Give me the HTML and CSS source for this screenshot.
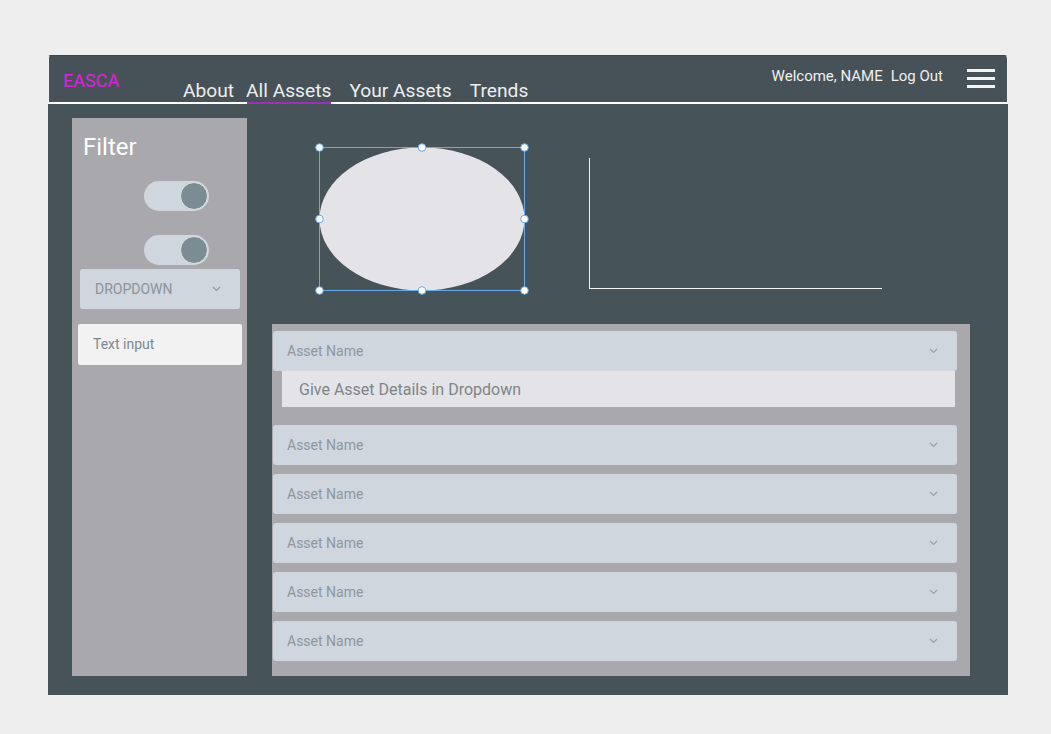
FILE: index.html
```html
<!DOCTYPE html>
<html>
<head>
<meta charset="utf-8">
<link rel="stylesheet" href="styles.css">
</head>
<body>
<div class="frame">
  <header class="header">
    <div class="brand">EASCA</div>
    <nav class="nav">
      <a class="nav-link">About</a>
      <a class="nav-link active">All Assets</a>
      <a class="nav-link">Your Assets</a>
      <a class="nav-link">Trends</a>
    </nav>
    <div class="user">
      <span class="welcome">Welcome, NAME</span>
      <span class="logout">Log Out</span>
    </div>
    <div class="burger"><span></span><span></span><span></span></div>
  </header>
  <main class="body">
    <aside class="sidebar">
      <h2 class="filter-title">Filter</h2>
      <div class="toggle"><span class="knob"></span></div>
      <div class="toggle second"><span class="knob"></span></div>
      <div class="dropdown">
        <span>DROPDOWN</span>
        <svg class="chev" width="9" height="6" viewBox="0 0 9 6"><path d="M1 1l3.5 3.5L8 1" fill="none" stroke="#8e989d" stroke-width="1.2"/></svg>
      </div>
      <div class="text-input">Text input</div>
    </aside>
    <section class="content">
      <div class="charts">
        <div class="shape">
          <svg width="214" height="152" viewBox="0 0 214 152">
            <ellipse cx="107" cy="76" rx="102.5" ry="71.5" fill="#e4e3e7"/>
            <rect x="4.5" y="4.5" width="205" height="143" fill="none" stroke="#66aaeb" stroke-width="1"/>
            <g fill="#ffffff" stroke="#66aaeb" stroke-width="1">
              <circle cx="4.5" cy="4.5" r="3.8"/>
              <circle cx="107" cy="4.5" r="3.8"/>
              <circle cx="209.5" cy="4.5" r="3.8"/>
              <circle cx="4.5" cy="76" r="3.8"/>
              <circle cx="209.5" cy="76" r="3.8"/>
              <circle cx="4.5" cy="147.5" r="3.8"/>
              <circle cx="107" cy="147.5" r="3.8"/>
              <circle cx="209.5" cy="147.5" r="3.8"/>
            </g>
          </svg>
        </div>
        <div class="axes"></div>
      </div>
      <div class="list">
        <div class="item open">
          <div class="item-head"><span>Asset Name</span><svg class="chev" width="9" height="6" viewBox="0 0 9 6"><path d="M1 1l3.5 3.5L8 1" fill="none" stroke="#98a1a6" stroke-width="1.2"/></svg></div>
          <div class="item-body">Give Asset Details in Dropdown</div>
        </div>
        <div class="item"><div class="item-head"><span>Asset Name</span><svg class="chev" width="9" height="6" viewBox="0 0 9 6"><path d="M1 1l3.5 3.5L8 1" fill="none" stroke="#98a1a6" stroke-width="1.2"/></svg></div></div>
        <div class="item"><div class="item-head"><span>Asset Name</span><svg class="chev" width="9" height="6" viewBox="0 0 9 6"><path d="M1 1l3.5 3.5L8 1" fill="none" stroke="#98a1a6" stroke-width="1.2"/></svg></div></div>
        <div class="item"><div class="item-head"><span>Asset Name</span><svg class="chev" width="9" height="6" viewBox="0 0 9 6"><path d="M1 1l3.5 3.5L8 1" fill="none" stroke="#98a1a6" stroke-width="1.2"/></svg></div></div>
        <div class="item"><div class="item-head"><span>Asset Name</span><svg class="chev" width="9" height="6" viewBox="0 0 9 6"><path d="M1 1l3.5 3.5L8 1" fill="none" stroke="#98a1a6" stroke-width="1.2"/></svg></div></div>
        <div class="item"><div class="item-head"><span>Asset Name</span><svg class="chev" width="9" height="6" viewBox="0 0 9 6"><path d="M1 1l3.5 3.5L8 1" fill="none" stroke="#98a1a6" stroke-width="1.2"/></svg></div></div>
      </div>
    </section>
  </main>
</div>
</body>
</html>
```
FILE: styles.css
```css
* { box-sizing: border-box; }
html, body { margin: 0; padding: 0; }
body {
  background: #eeeeee;
  font-family: Roboto, "Liberation Sans", sans-serif;
  width: 1051px;
  height: 734px;
  overflow: hidden;
}
.frame {
  margin: 55px 0 0 48px;
  width: 960px;
  height: 640px;
  display: flex;
  flex-direction: column;
}
.header {
  height: 49px;
  background: #465257;
  border: 1px solid #f2f2f2;
  border-top-color: #3e494e;
  border-bottom: 2px solid #ffffff;
  border-radius: 3px 4px 0 0;
  display: flex;
  align-items: flex-start;
  padding-left: 14px;
}
.brand {
  color: #e020e0;
  font-size: 18px;
  line-height: 20px;
  margin-top: 15px;
  width: 120px;
}
.nav {
  display: flex;
  margin-top: 23px;
}
.nav-link {
  color: #eeeeee;
  font-size: 19.2px;
  line-height: 23px;
  margin-right: 18px;
  position: relative;
}
.nav-link:first-child { margin-right: 12px; }
.nav-link.active::after {
  content: "";
  position: absolute;
  left: 1px;
  right: 0;
  bottom: -2px;
  height: 2px;
  background: #9b32b4;
}
.user {
  margin-left: auto;
  margin-top: 11px;
  display: flex;
  font-size: 15px;
  line-height: 19px;
  color: #f0f0f0;
}
.welcome { margin-right: 8px; }
.burger {
  margin: 13px 12px 0 24px;
  width: 28px;
  display: flex;
  flex-direction: column;
  gap: 5px;
}
.burger span {
  display: block;
  height: 3px;
  background: #f4f4f4;
}
.body {
  flex: 1;
  background: #465358;
  display: flex;
  padding: 14px 0 19px 24px;
}
.sidebar {
  width: 175px;
  background: #a9a8ac;
  padding: 0 5px 0 6px;
  display: flex;
  flex-direction: column;
}
.filter-title {
  margin: 15px 0 0 5px;
  font-weight: 400;
  font-size: 24px;
  line-height: 28px;
  color: #ffffff;
}
.toggle {
  margin: 20px 0 0 66px;
  width: 65px;
  height: 30px;
  border-radius: 15px;
  background: #cfd6dd;
  position: relative;
}
.toggle.second { margin-top: 24px; }
.knob {
  position: absolute;
  right: 1px;
  top: 1px;
  width: 28px;
  height: 28px;
  border-radius: 50%;
  background: #7b8c92;
  border: 1.5px solid #dde3e7;
}
.dropdown {
  margin: 4px 2px 0 2px;
  height: 40px;
  background: #cfd6dd;
  border-radius: 3px;
  display: flex;
  align-items: center;
  padding: 0 19px 0 15px;
  justify-content: space-between;
  color: #8a949a;
  font-size: 14px;
}
.text-input {
  margin-top: 15px;
  height: 41px;
  background: #f2f2f3;
  border-radius: 2px;
  color: #7b8a90;
  font-size: 14px;
  padding: 12px 0 0 15px;
}
.content {
  margin-left: 25px;
  width: 698px;
  display: flex;
  flex-direction: column;
}
.charts {
  height: 206px;
  display: flex;
  align-items: flex-start;
}
.shape {
  margin: 25px 0 0 43px;
  height: 152px;
}
.shape svg { display: block; }
.axes {
  margin: 40px 0 0 60px;
  width: 293px;
  height: 131px;
  border-left: 1px solid #f4f4f4;
  border-bottom: 1px solid #f4f4f4;
}
.list {
  flex: 1;
  background: #a9a8ac;
  padding: 7px 13px 0 1px;
  display: flex;
  flex-direction: column;
  gap: 9px;
}
.item.open { margin-bottom: 9px; }
.item-head {
  height: 40px;
  background: #cfd6dd;
  border-radius: 3px;
  display: flex;
  align-items: center;
  justify-content: space-between;
  padding: 0 19px 0 14px;
  color: #8d979c;
  font-size: 14px;
}
.item-body {
  margin: 0 2px 0 9px;
  height: 36px;
  background: #e4e3e7;
  color: #7d8589;
  font-size: 16px;
  padding: 9px 0 0 17px;
}
.chev { display: block; }
```
